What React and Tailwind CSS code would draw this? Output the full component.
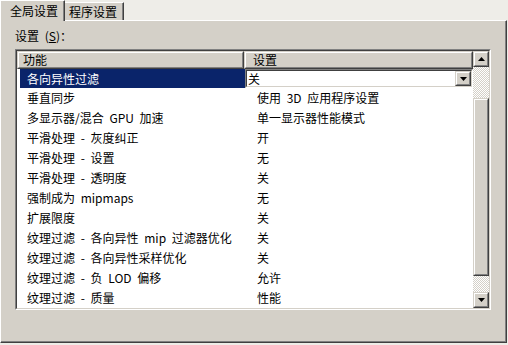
import React from "react";

const rows = [
  ["垂直同步", "使用 3D 应用程序设置"],
  ["多显示器/混合 GPU 加速", "单一显示器性能模式"],
  ["平滑处理 - 灰度纠正", "开"],
  ["平滑处理 - 设置", "无"],
  ["平滑处理 - 透明度", "关"],
  ["强制成为 mipmaps", "无"],
  ["扩展限度", "关"],
  ["纹理过滤 - 各向异性 mip 过滤器优化", "关"],
  ["纹理过滤 - 各向异性采样优化", "关"],
  ["纹理过滤 - 负 LOD 偏移", "允许"],
  ["纹理过滤 - 质量", "性能"],
];

const Arrow = ({ up }) => (
  <svg width="7" height="4" viewBox="0 0 7 4">
    <path d={up ? "M3.5 0 L7 4 L0 4 Z" : "M0 0 L7 0 L3.5 4 Z"} fill="#000" />
  </svg>
);

// classic raised 3d button
const RaisedBox = ({ className = "", children }) => (
  <div className={`border border-t-[#d4d0c8] border-l-[#d4d0c8] border-r-[#404040] border-b-[#404040] bg-[#d4d0c8] ${className}`}>
    <div className="w-full h-full border border-t-white border-l-white border-r-[#808080] border-b-[#808080] flex items-center justify-center">
      {children}
    </div>
  </div>
);

const checker =
  "bg-[repeating-conic-gradient(#d4d0c8_0%_25%,#ffffff_0%_50%)] bg-[length:2px_2px]";

export default function App() {
  return (
    <div
      className="w-[508px] h-[345px] bg-[#eeede8] flex flex-col text-[12px] text-black overflow-hidden [word-spacing:3px]"
      style={{ fontFamily: '"Noto Sans CJK SC", "Liberation Sans", sans-serif' }}
    >
      {/* Tabs */}
      <div className="h-[20px] flex items-end">
        <div className="relative z-10 h-[21px] -mb-px w-[65px] bg-[#d4d0c8] border-l border-t border-white border-r border-r-[#404040] shadow-[inset_-1px_0_0_#808080] flex items-center pl-[9px] leading-none">
          全局设置
        </div>
        <div className="h-[18px] w-[59px] bg-[#d4d0c8] border-t border-white border-r border-r-[#404040] shadow-[inset_-1px_0_0_#808080] flex items-center pl-[4px] leading-none">
          程序设置
        </div>
      </div>

      {/* Panel */}
      <div className="w-[507px] h-[323px] bg-[#d4d0c8] border-l border-t border-white border-r border-b border-r-[#404040] border-b-[#404040] shadow-[inset_-1px_-1px_0_#808080] pl-[14px] pt-[8px] flex flex-col">
        <div className="h-[14px] leading-[14px]">
          设置 (<span className="underline">S</span>)：
        </div>

        {/* List box */}
        <div className="mt-[6px] w-[476px] h-[261px] border border-t-[#808080] border-l-[#808080] border-r-white border-b-white">
          <div className="w-full h-full border border-t-[#404040] border-l-[#404040] border-r-[#d4d0c8] border-b-[#d4d0c8] flex bg-white">
            <div className="flex-1 flex flex-col">
              {/* Header */}
              <div className="h-[18px] flex">
                <RaisedBox className="w-[227px] h-full">
                  <div className="w-full pl-[4px] leading-none">功能</div>
                </RaisedBox>
                <RaisedBox className="flex-1 h-full">
                  <div className="w-full pl-[7px] leading-none">设置</div>
                </RaisedBox>
              </div>

              {/* Selected row */}
              <div className="h-[19px] flex">
                <div className="w-[228px] pl-[3px] flex">
                  <div className="flex-1 bg-[#0a246a] text-white flex items-center pl-[7px] leading-none">
                    各向异性过滤
                  </div>
                </div>
                <div className="flex-1 border border-t-[#808080] border-l-[#808080] border-r-white border-b-white">
                  <div className="w-full h-full border border-t-[#404040] border-l-[#404040] border-r-[#d4d0c8] border-b-[#d4d0c8] flex items-center bg-white">
                    <div className="flex-1 pl-[1px] leading-none">关</div>
                    <RaisedBox className="w-[16px] h-full">
                      <Arrow />
                    </RaisedBox>
                  </div>
                </div>
              </div>

              {rows.map(([name, value]) => (
                <div key={name} className="h-[20px] flex items-center leading-none">
                  <div className="w-[228px] pl-[10px]">{name}</div>
                  <div className="flex-1 pl-[12px]">{value}</div>
                </div>
              ))}
            </div>

            {/* Scrollbar */}
            <div className="w-[16px] flex flex-col">
              <RaisedBox className="h-[16px]">
                <Arrow up />
              </RaisedBox>
              <div className={`h-[31px] ${checker}`} />
              <RaisedBox className="h-[178px]" />
              <div className={`flex-1 ${checker}`} />
              <RaisedBox className="h-[16px]">
                <Arrow />
              </RaisedBox>
            </div>
          </div>
        </div>
      </div>
    </div>
  );
}
